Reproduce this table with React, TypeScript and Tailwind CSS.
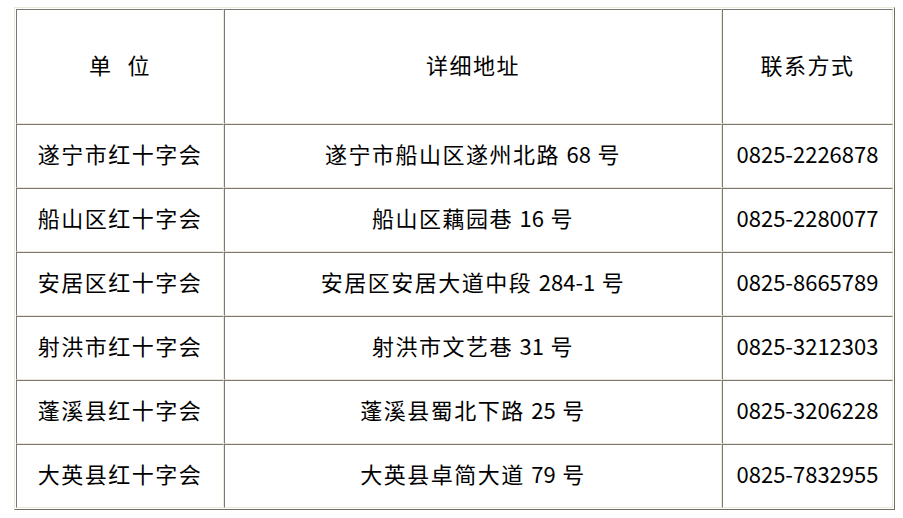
import React from "react";

// 红十字会联系方式表
const ROWS = [
  { unit: "遂宁市红十字会", addr: "遂宁市船山区遂州北路 68 号", tel: "0825-2226878" },
  { unit: "船山区红十字会", addr: "船山区藕园巷 16 号", tel: "0825-2280077" },
  { unit: "安居区红十字会", addr: "安居区安居大道中段 284-1 号", tel: "0825-8665789" },
  { unit: "射洪市红十字会", addr: "射洪市文艺巷 31 号", tel: "0825-3212303" },
  { unit: "蓬溪县红十字会", addr: "蓬溪县蜀北下路 25 号", tel: "0825-3206228" },
  { unit: "大英县红十字会", addr: "大英县卓简大道 79 号", tel: "0825-7832955" },
];

const cell =
  "border border-t-[#7a7870] border-l-[#7a7870] border-b-[#ECE9D8] border-r-[#ECE9D8] text-center align-middle px-0 pt-0";

// digits keep normal spacing, Chinese gets a little extra
function Mixed({ text }: { text: string }) {
  const parts = text.split(/([0-9\-]+)/);
  return (
    <>
      {parts.map((p, i) =>
        /^[0-9\-]+$/.test(p) ? (
          <span key={i} className="tracking-normal">
            {p}
          </span>
        ) : (
          <span key={i}>{p}</span>
        )
      )}
    </>
  );
}

export default function App() {
  return (
    <div
      className="bg-white min-h-screen pt-[7px] pl-[14px] text-black text-[22px]"
      style={{ fontFamily: '"Noto Sans CJK SC", "Noto Sans", sans-serif' }}
    >
      <table className="table-fixed w-[881px] border-separate border-spacing-0 border border-t-[#ECE9D8] border-l-[#ECE9D8] border-b-[#716F64] border-r-[#716F64] p-px">
        <colgroup>
          <col className="w-[208px]" />
          <col className="w-[498px]" />
          <col className="w-[171px]" />
        </colgroup>
        <tbody>
          <tr className="h-[115px]">
            <td className={`${cell} pb-[4px] tracking-[1.5px]`}>
              单<span className="inline-block w-[15px]" />位
            </td>
            <td className={`${cell} pb-[4px] tracking-[1.5px]`}>详细地址</td>
            <td className={`${cell} pb-[4px] tracking-[1.5px]`}>联系方式</td>
          </tr>
          {ROWS.map((r) => (
            <tr key={r.unit} className="h-[64px]">
              <td className={`${cell} pb-[5px] tracking-[1.5px]`}>{r.unit}</td>
              <td className={`${cell} pb-[5px] tracking-[1.5px]`}>
                <Mixed text={r.addr} />
              </td>
              <td className={`${cell} pb-[5px]`}>{r.tel}</td>
            </tr>
          ))}
        </tbody>
      </table>
    </div>
  );
}
